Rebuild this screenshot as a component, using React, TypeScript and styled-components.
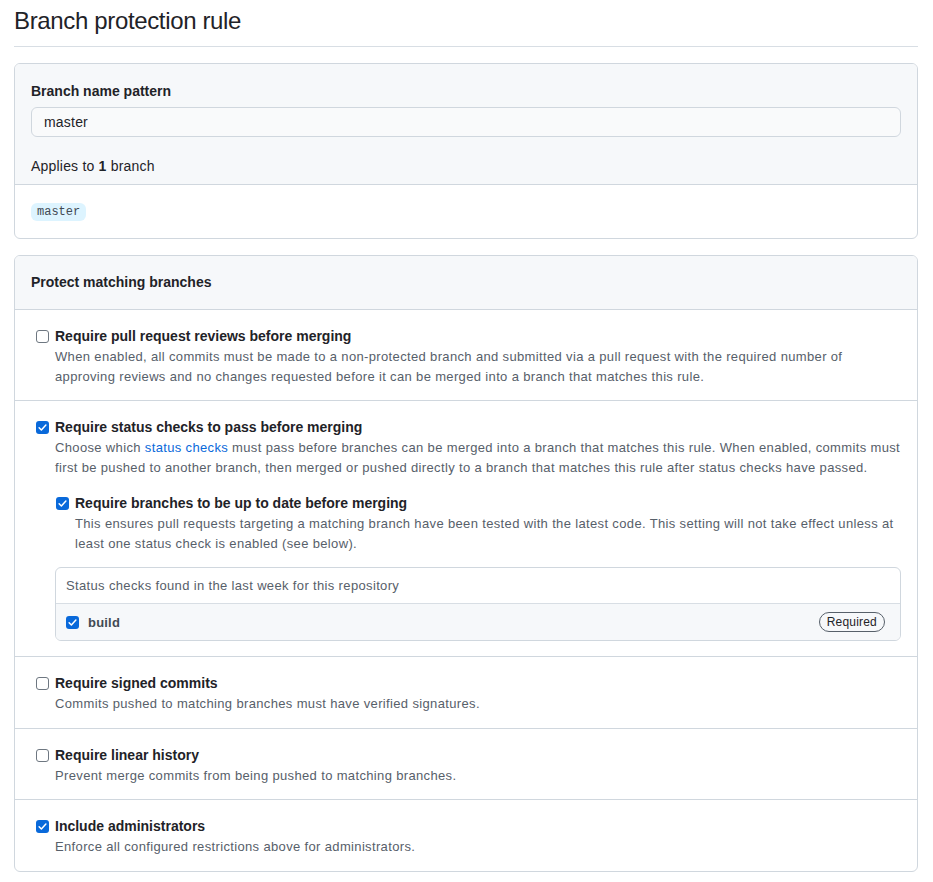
import React from 'react';
import styled, { createGlobalStyle } from 'styled-components';

const GlobalStyle = createGlobalStyle`
    body {
        margin: 0;
        background: #ffffff;
        font-family: "Liberation Sans", Arial, sans-serif;
        color: #1f2328;
    }
`;

const Page = styled.div`
    padding: 0 15px 12px 14px;
`;

const Title = styled.h2`
    margin: 0 0 16px;
    padding: 6px 0 10px;
    font-size: 24px;
    font-weight: 400;
    line-height: 30px;
    letter-spacing: -0.35px;
    border-bottom: 1px solid #d8dee4;
`;

const Box = styled.div`
    border: 1px solid #d0d7de;
    border-radius: 6px;
    margin-bottom: 16px;
    overflow: hidden;
`;

const BoxHeader = styled.div`
    background: #f6f8fa;
    border-bottom: 1px solid #d0d7de;
    padding: 16px 16px 17px;
    font-size: 14px;
    line-height: 21px;
`;

const PatternHeader = styled(BoxHeader)`
    padding: 17px 16px 8px;
`;

const Label = styled.div`
    font-weight: 700;
    font-size: 14px;
    line-height: 20px;
`;

const Input = styled.div`
    margin-top: 6px;
    height: 30px;
    box-sizing: border-box;
    border: 1px solid #d0d7de;
    border-radius: 6px;
    background: #f9fafb;
    padding: 0 12px;
    display: flex;
    align-items: center;
    font-size: 14px;
    letter-spacing: 0.2px;
`;

const Applies = styled.p`
    margin: 19px 0 0;
    font-size: 14px;
    line-height: 20px;
    letter-spacing: 0.2px;
`;

const BoxBody = styled.div`
    padding: 16px 16px 17px;
`;

const Chip = styled.code`
    display: inline-block;
    padding: 0 6px;
    height: 18px;
    line-height: 18px;
    border-radius: 6px;
    background: #ddf4ff;
    color: #424a53;
    font-family: "Liberation Mono", "DejaVu Sans Mono", monospace;
    font-size: 12px;
`;

const Item = styled.div`
    display: flex;
    padding: 16px 16px 14px;
    border-bottom: 1px solid #d0d7de;
    &:last-child {
        border-bottom: none;
    }
`;

const Nested = styled.div`
    display: flex;
    margin-top: 16px;
`;

const Check = styled.span<{ $on?: boolean; $inset?: number }>`
    flex: none;
    width: 13px;
    height: 13px;
    box-sizing: border-box;
    margin: 4px 6px 0 ${p => p.$inset ?? 5}px;
    border-radius: 3px;
    border: ${p => (p.$on ? 'none' : '1px solid #6e7781')};
    background: ${p => (p.$on ? '#0969da' : '#ffffff')};
    display: flex;
    align-items: center;
    justify-content: center;
`;

const Text = styled.div`
    flex: 1;
    min-width: 0;
`;

const ItemTitle = styled.div`
    font-weight: 700;
    font-size: 14px;
    line-height: 20px;
`;

const Note = styled.p`
    margin: 1px -5px 0 0;
    font-size: 13px;
    line-height: 19.5px;
    letter-spacing: 0.35px;
    color: #57606a;
`;

const Link = styled.a`
    color: #0969da;
    text-decoration: none;
`;

const Checks = styled.div`
    margin: 14px 0 1px;
    border: 1px solid #d0d7de;
    border-radius: 6px;
    overflow: hidden;
`;

const ChecksHeader = styled.div`
    height: 35px;
    padding: 0 10px;
    display: flex;
    align-items: center;
    font-size: 13px;
    letter-spacing: 0.35px;
    color: #57606a;
    border-bottom: 1px solid #d8dee4;
`;

const CheckRow = styled.div`
    height: 36px;
    padding: 0 15px 0 10px;
    display: flex;
    align-items: center;
    background: #f6f8fa;
    font-size: 13px;
    font-weight: 700;
    letter-spacing: 0.2px;
    color: #424a53;
    ${Check} {
        margin: 0 9px 0 0;
    }
`;

const Badge = styled.span`
    margin-left: auto;
    height: 20px;
    box-sizing: border-box;
    padding: 0 7px;
    border: 1px solid #57606a;
    border-radius: 10px;
    display: flex;
    align-items: center;
    font-size: 12px;
    font-weight: 500;
    letter-spacing: 0.2px;
    color: #1f2328;
`;

const Tick = () => (
    <svg width="9" height="9" viewBox="0 0 12 12" fill="none">
        <path d="M1.5 6.3l3 3L10.5 2.8" stroke="#fff" strokeWidth="2" strokeLinecap="round" strokeLinejoin="round" />
    </svg>
);

const PatternBox = () => (
    <Box>
        <PatternHeader>
            <Label>Branch name pattern</Label>
            <Input>master</Input>
            <Applies>Applies to <b>1</b> branch</Applies>
        </PatternHeader>
        <BoxBody>
            <Chip>master</Chip>
        </BoxBody>
    </Box>
);

interface OptionProps {
    on?: boolean;
    title: string;
    children?: React.ReactNode;
}

const Option: React.FC<OptionProps> = ({ on, title, children }) => (
    <Item>
        <Check $on={on}>{on && <Tick />}</Check>
        <Text>
            <ItemTitle>{title}</ItemTitle>
            {children}
        </Text>
    </Item>
);

export default function App() {
    return (
        <Page>
            <GlobalStyle />
            <Title>Branch protection rule</Title>
            <PatternBox />
            <Box>
                <BoxHeader>
                    <Label>Protect matching branches</Label>
                </BoxHeader>
                <Option title="Require pull request reviews before merging">
                    <Note>
                        When enabled, all commits must be made to a non-protected branch and submitted via a pull request with the required number of approving reviews and no changes requested before it can be merged into a branch that matches this rule.
                    </Note>
                </Option>
                <Option on title="Require status checks to pass before merging">
                    <Note>
                        Choose which <Link href="#">status checks</Link> must pass before branches can be merged into a branch that matches this rule. When enabled, commits must first be pushed to another branch, then merged or pushed directly to a branch that matches this rule after status checks have passed.
                    </Note>
                    <Nested>
                        <Check $on $inset={1}><Tick /></Check>
                        <Text>
                            <ItemTitle>Require branches to be up to date before merging</ItemTitle>
                            <Note>
                                This ensures pull requests targeting a matching branch have been tested with the latest code. This setting will not take effect unless at least one status check is enabled (see below).
                            </Note>
                        </Text>
                    </Nested>
                    <Checks>
                        <ChecksHeader>Status checks found in the last week for this repository</ChecksHeader>
                        <CheckRow>
                            <Check $on><Tick /></Check>
                            build
                            <Badge>Required</Badge>
                        </CheckRow>
                    </Checks>
                </Option>
                <Option title="Require signed commits">
                    <Note>Commits pushed to matching branches must have verified signatures.</Note>
                </Option>
                <Option title="Require linear history">
                    <Note>Prevent merge commits from being pushed to matching branches.</Note>
                </Option>
                <Option on title="Include administrators">
                    <Note>Enforce all configured restrictions above for administrators.</Note>
                </Option>
            </Box>
        </Page>
    );
}
